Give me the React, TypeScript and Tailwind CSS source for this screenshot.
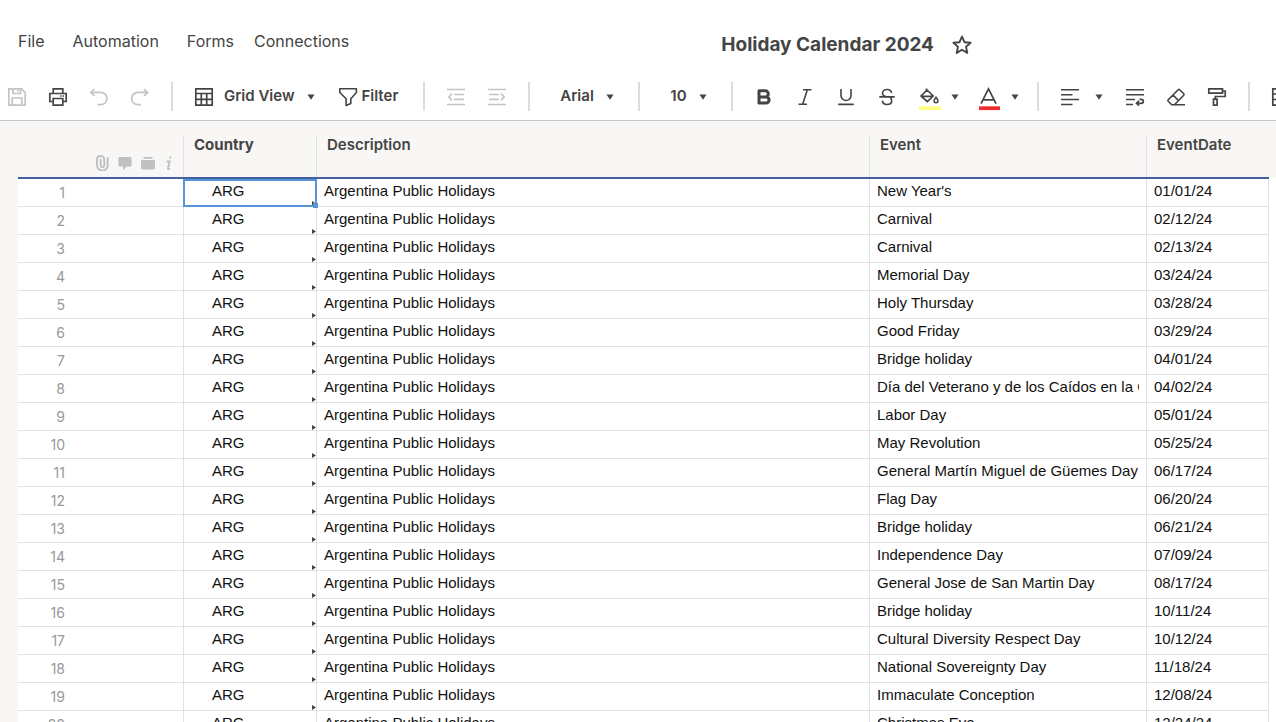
import type { ReactNode } from "react";

type Holiday = {
  country: string;
  description: string;
  event: string;
  date: string;
};

const EVENTS: [string, string][] = [
  ["New Year's", "01/01/24"],
  ["Carnival", "02/12/24"],
  ["Carnival", "02/13/24"],
  ["Memorial Day", "03/24/24"],
  ["Holy Thursday", "03/28/24"],
  ["Good Friday", "03/29/24"],
  ["Bridge holiday", "04/01/24"],
  ["Día del Veterano y de los Caídos en la Guerra", "04/02/24"],
  ["Labor Day", "05/01/24"],
  ["May Revolution", "05/25/24"],
  ["General Martín Miguel de Güemes Day", "06/17/24"],
  ["Flag Day", "06/20/24"],
  ["Bridge holiday", "06/21/24"],
  ["Independence Day", "07/09/24"],
  ["General Jose de San Martin Day", "08/17/24"],
  ["Bridge holiday", "10/11/24"],
  ["Cultural Diversity Respect Day", "10/12/24"],
  ["National Sovereignty Day", "11/18/24"],
  ["Immaculate Conception", "12/08/24"],
  ["Christmas Eve", "12/24/24"],
];

const rows: Holiday[] = EVENTS.map(([event, date]) => ({
  country: "ARG",
  description: "Argentina Public Holidays",
  event,
  date,
}));

function Icon({ children, w = 18 }: { children: ReactNode; w?: number }) {
  return (
    <svg
      width={w}
      height="18"
      viewBox={`0 0 ${w} 18`}
      fill="none"
      stroke="currentColor"
      strokeWidth="1.5"
      className="block shrink-0 overflow-visible"
      aria-hidden="true"
    >
      {children}
    </svg>
  );
}

function Caret() {
  return (
    <svg width="8" height="6" viewBox="0 0 8 6" className="block shrink-0" aria-hidden="true">
      <path d="M0.5 0.5h7L4 5.8z" fill="#444" />
    </svg>
  );
}

function Divider() {
  return <div className="mx-[22px] h-[29px] w-[2px] shrink-0 bg-[#dcdcdc]" />;
}

function Tool({
  label,
  disabled,
  children,
}: {
  label: string;
  disabled?: boolean;
  children: ReactNode;
}) {
  return (
    <button
      aria-label={label}
      disabled={disabled}
      className="flex shrink-0 items-center text-[#444] disabled:text-[#c4c4c4]"
    >
      {children}
    </button>
  );
}

function Picker({ label, value }: { label: string; value: string }) {
  return (
    <label className="flex shrink-0 items-center gap-3 pr-[2px] pl-2">
      <select
        aria-label={label}
        defaultValue={value}
        className="appearance-none bg-transparent font-semibold"
      >
        <option>{value}</option>
      </select>
      <Caret />
    </label>
  );
}

function TopBar() {
  return (
    <header className="flex h-[73px] shrink-0 items-center pt-2 pl-[18px]">
      <nav className="flex items-center gap-5 text-base text-[#444]">
        <div className="flex items-center gap-7">
          <a href="#file">File</a>
          <a href="#automation">Automation</a>
          <a href="#forms">Forms</a>
        </div>
        <a href="#connections">Connections</a>
      </nav>
      <div className="flex flex-1 items-center justify-center gap-[18px] pt-2 pl-[68px]">
        <h1 className="text-[19px] leading-6 font-bold text-[#444]">Holiday Calendar 2024</h1>
        <button aria-label="Add to favorites" className="text-[#444]">
          <svg width="20" height="20" viewBox="0 0 20 20" fill="none" className="block" aria-hidden="true">
            <path
              d="M10 1.6l2.5 5.6 6.1.6-4.6 4.1 1.3 6-5.3-3.1-5.3 3.1 1.3-6L1.4 7.8l6.1-.6z"
              stroke="currentColor"
              strokeWidth="1.9"
              strokeLinejoin="round"
            />
          </svg>
        </button>
      </div>
    </header>
  );
}

function Toolbar() {
  return (
    <div
      role="toolbar"
      aria-label="Formatting"
      className="flex h-12 shrink-0 items-center overflow-hidden border-b border-[#c8c8c8] pl-2 text-[15px] font-semibold text-[#444]"
    >
      <div className="flex shrink-0 gap-[23px]">
        <Tool label="Save" disabled>
          <Icon>
            <path d="M.8.8h12.7l3.7 3.7v12.7H.8zM5 .8v4.7h7.5V.8M9.8 2v1.7M4.2 17v-7h9.6v7" strokeWidth="1.7" />
          </Icon>
        </Tool>
        <Tool label="Print">
          <Icon>
            <path d="M4.2 5.2V.8h9.6v4.4M4.2 13.5H.8V5.5h16.4v8h-3.4M4.2 10.5h9.6v6.7H4.2z" strokeWidth="1.7" />
            <path d="M11.2 8h1.4M13.6 8H15" />
          </Icon>
        </Tool>
        <Tool label="Undo" disabled>
          <Icon>
            <path d="M4.5 1L.9 4.4l3.6 3.4M1 4.4h9.8a6.1 6.1 0 0 1 0 12.2H7.5" strokeWidth="1.7" />
          </Icon>
        </Tool>
        <Tool label="Redo" disabled>
          <Icon>
            <path d="M13 1l3.6 3.4L13 7.8M16.5 4.4H6.7a6.1 6.1 0 0 0 0 12.2H10" strokeWidth="1.7" />
          </Icon>
        </Tool>
      </div>
      <Divider />
      <div className="flex shrink-0 items-center gap-6 pr-[3px]">
        <button className="flex items-center gap-[11px]">
          <Icon>
            <path d="M.8.8h16.4v16.4H.8zM.8 5.5h16.4M.8 11.4h16.4M6.3 5.5v11.7M11.7 5.5v11.7" strokeWidth="1.7" />
          </Icon>
          <span className="pr-[2px]">Grid View</span>
          <Caret />
        </button>
        <button className="flex items-center gap-1">
          <Icon>
            <path d="M.8.8h16.6v3.7l-5.6 6.2v4.8l-4.7 2v-6.8L.8 4.5z" strokeWidth="1.6" strokeLinejoin="round" />
          </Icon>
          <span>Filter</span>
        </button>
      </div>
      <Divider />
      <div className="flex shrink-0 gap-[23px]">
        <Tool label="Outdent" disabled>
          <Icon>
            <path d="M0 1.5h18M7 6.5h10M7 11.3h10M0 16.5h18M5 5.5L1.8 8.9 5 12.3" strokeWidth="1.7" />
          </Icon>
        </Tool>
        <Tool label="Indent" disabled>
          <Icon>
            <path d="M0 1.5h18M1 6.5h10M1 11.3h10M0 16.5h18M13 5.5l3.2 3.4-3.2 3.4" strokeWidth="1.7" />
          </Icon>
        </Tool>
      </div>
      <Divider />
      <Picker label="Font" value="Arial" />
      <Divider />
      <Picker label="Font size" value="10" />
      <Divider />
      <div className="-mr-1 flex shrink-0 gap-[23px]">
        <Tool label="Bold">
          <Icon>
            <path
              d="M4 2.8h6.3a3 3 0 0 1 0 6.1H4zM4 8.9h7a3.1 3.1 0 0 1 0 6.2H4z"
              strokeWidth="3"
              strokeLinejoin="round"
            />
          </Icon>
        </Tool>
        <Tool label="Italic">
          <Icon>
            <path d="M7 1.7h8.5M2.5 16.3H11M11.3 1.7L6.7 16.3" strokeWidth="1.6" />
          </Icon>
        </Tool>
        <Tool label="Underline">
          <Icon>
            <path d="M4 1v6.5a5 5 0 0 0 10 0V1M1.2 16.4h15.6" strokeWidth="1.6" />
          </Icon>
        </Tool>
        <Tool label="Strikethrough">
          <Icon>
            <path
              d="M13.5 5C13.2 2.7 11.5 1.5 9 1.5 6.3 1.5 4.5 3 4.5 5.2c0 2 1.5 3 4 3.6M1.3 8.9h15.4M4.3 12.7c.3 2.5 2.2 3.8 4.7 3.8 2.8 0 4.7-1.4 4.7-3.8 0-1.4-.7-2.7-1.7-3.5"
              strokeWidth="1.6"
            />
          </Icon>
        </Tool>
        <div className="flex shrink-0 items-center gap-5">
          <button aria-label="Background color" className="flex items-center gap-[10px]">
            <Icon w={22}>
              <path d="M7.5.5v2M8 2l6.3 6-6 5.6L2 8zM2 8.3h12" strokeWidth="1.7" strokeLinejoin="round" />
              <path d="M17 9.3c1.2 1.5 2 2.5 2 3.5a2 2 0 0 1-4 0c0-1 .8-2 2-3.5z" strokeWidth="1.5" />
              <path d="M0 20.2h22" stroke="#ffff7d" strokeWidth="3.5" />
            </Icon>
            <Caret />
          </button>
          <button aria-label="Font color" className="flex items-center gap-[11px]">
            <Icon w={21}>
              <path d="M2 15.7L9.5.8 17 15.7M4 11.8h11" strokeWidth="1.7" />
              <path d="M0 20.2h21" stroke="#ee2e2e" strokeWidth="3.8" />
            </Icon>
            <Caret />
          </button>
        </div>
      </div>
      <Divider />
      <div className="flex shrink-0 gap-[23px]">
        <button aria-label="Align" className="flex items-center gap-4">
          <Icon>
            <path d="M0 1.7h18M0 6.7h11.5M0 11.5h18M0 16.5h11.5" strokeWidth="1.6" />
          </Icon>
          <Caret />
        </button>
        <Tool label="Wrap text">
          <Icon>
            <path d="M0 1.7h18M0 6.7h18M0 11.5h9M0 16.5h7" strokeWidth="1.6" />
            <path d="M13.5 11.3h1.6c3 0 3 4 0 4h-4M13 12.8l-2.5 2.5 2.5 2.4" strokeWidth="1.7" />
          </Icon>
        </Tool>
        <Tool label="Clear formatting">
          <Icon>
            <path
              d="M4.7 16.7L1.2 13.3c-.5-.5-.5-1 0-1.5L11.2 1.8c.5-.5 1-.5 1.5 0l4 4c.5.5.5 1 0 1.5l-9.3 9.4zM6 7l5.6 5.6M4.7 16.7H18"
              strokeWidth="1.6"
              strokeLinejoin="round"
            />
          </Icon>
        </Tool>
        <Tool label="Format painter">
          <Icon>
            <path d="M.8.9h13.7v4.3H.8zM14.5 3h2.7v5.5H7.3v2.7M5.5 11.2h3.6v6H5.5z" strokeWidth="1.7" />
          </Icon>
        </Tool>
      </div>
      <Divider />
      <Tool label="Borders">
        <Icon>
          <path d="M.8.8h16.4v16.4H.8zM.8 6h16.4M.8 11.5h16.4" strokeWidth="1.7" />
        </Icon>
      </Tool>
    </div>
  );
}

// attachment, comment, proof and row-info markers above the row numbers
function RowMarkers() {
  return (
    <div className="flex h-[42px] items-end justify-end gap-[9px] border-r border-[#e2e2e2] pr-[10px] pb-[6px] text-[#c0c0c0]">
      <svg width="14" height="16" viewBox="0 0 14 16" fill="none" stroke="currentColor" strokeWidth="1.9" aria-hidden="true">
        <path d="M12.7 3v7.2a5.2 5.2 0 0 1-10.7 0V4.5c0-4.6 7.3-4.6 7.3 0v5.6c0 2.6-3.7 2.6-3.7 0V4.8" strokeLinecap="round" />
      </svg>
      <svg width="14" height="16" viewBox="0 0 14 16" fill="currentColor" aria-hidden="true">
        <path d="M1.5 2h11a1 1 0 0 1 1 1v7.5a1 1 0 0 1-1 1H8.5L5 15.5v-4H1.5a1 1 0 0 1-1-1V3a1 1 0 0 1 1-1z" />
      </svg>
      <svg width="14" height="16" viewBox="0 0 14 16" fill="currentColor" aria-hidden="true">
        <path d="M2.5 2h9v1.7h-9zM1.2 5h11.6a1.2 1.2 0 0 1 1.2 1.2v7a1.2 1.2 0 0 1-1.2 1.3H1.2A1.2 1.2 0 0 1 0 13.2v-7A1.2 1.2 0 0 1 1.2 5z" />
      </svg>
      <svg width="9" height="16" viewBox="0 0 9 16" fill="none" stroke="currentColor" strokeWidth="1.8" aria-hidden="true">
        <path d="M6.3 1.2v2.2M2.5 6.5H5.7L3.9 13.3c-.2.9.9.9 2.2.2" />
      </svg>
    </div>
  );
}

function HeadCell({ children, last }: { children: ReactNode; last?: boolean }) {
  return (
    <th scope="col" className="border-b-2 border-[#4460a0] p-0 pt-[14px] text-left align-top font-semibold">
      <div className={last ? "h-[42px] pl-[10px]" : "h-[42px] border-r border-[#e2e2e2] pl-[10px]"}>
        {children}
      </div>
    </th>
  );
}

const cell = "h-7 border-r border-b border-[#e2e2e2] px-[7px] py-0 align-top whitespace-nowrap";

function Sheet() {
  return (
    <main className="flex min-h-0 flex-1 items-stretch overflow-hidden">
      <div className="w-[18px] shrink-0 bg-[#f8f7f5]" />
      <div className="min-w-0 flex-1">
        <table className="w-full table-fixed border-separate border-spacing-0">
          <colgroup>
            <col className="w-[166px]" />
            <col className="w-[133px]" />
            <col />
            <col className="w-[277px]" />
            <col className="w-[122px]" />
          </colgroup>
          <thead className="bg-[#f8f7f5] text-[15px] leading-5 text-[#444]">
            <tr>
              <th aria-label="Row" className="border-b-2 border-[#4460a0] p-0 pt-[14px] align-top">
                <RowMarkers />
              </th>
              <th scope="col" className="border-b-2 border-[#4460a0] p-0 pt-[14px] text-left align-top font-bold">
                <div className="h-[42px] border-r border-[#e2e2e2] pl-[10px]">Country</div>
              </th>
              <HeadCell>Description</HeadCell>
              <HeadCell>Event</HeadCell>
              <HeadCell last>EventDate</HeadCell>
            </tr>
          </thead>
          <tbody className="font-['Liberation_Sans',Arial,sans-serif] text-[15px] leading-6 text-[#111]">
            {rows.map((r, i) => (
              <tr key={i}>
                <th
                  scope="row"
                  className="h-7 border-r border-b border-[#e2e2e2] py-0 pr-[118px] pl-0 text-right font-[Inter] text-sm leading-[27px] font-normal text-[#999]"
                >
                  {i + 1}
                </th>
                <td className="relative h-7 border-r border-b border-[#e2e2e2] py-0 pl-7 align-top">
                  {r.country}
                  <svg width="4" height="5" viewBox="0 0 4 5" className="absolute right-0 bottom-0" aria-hidden="true">
                    <path d="M0 0l4 2.5L0 5z" fill="#444" />
                  </svg>
                  {i === 0 && (
                    <div className="absolute top-0 -right-px -bottom-px -left-px z-10 border-2 border-[#5596d8]">
                      <div className="absolute -right-[3px] -bottom-[3px] h-[5px] w-[5px] bg-[#5596d8]" />
                    </div>
                  )}
                </td>
                <td className={cell}>{r.description}</td>
                <td className={cell}>
                  <div className="overflow-hidden">{r.event}</div>
                </td>
                <td className={cell}>{r.date}</td>
              </tr>
            ))}
          </tbody>
        </table>
      </div>
      <div className="w-[7px] shrink-0">
        <div className="h-[57px] bg-[#f8f7f5]" />
      </div>
    </main>
  );
}

export default function App() {
  return (
    <div className="flex h-screen flex-col overflow-hidden bg-white font-[Inter,sans-serif]">
      <TopBar />
      <Toolbar />
      <Sheet />
    </div>
  );
}
